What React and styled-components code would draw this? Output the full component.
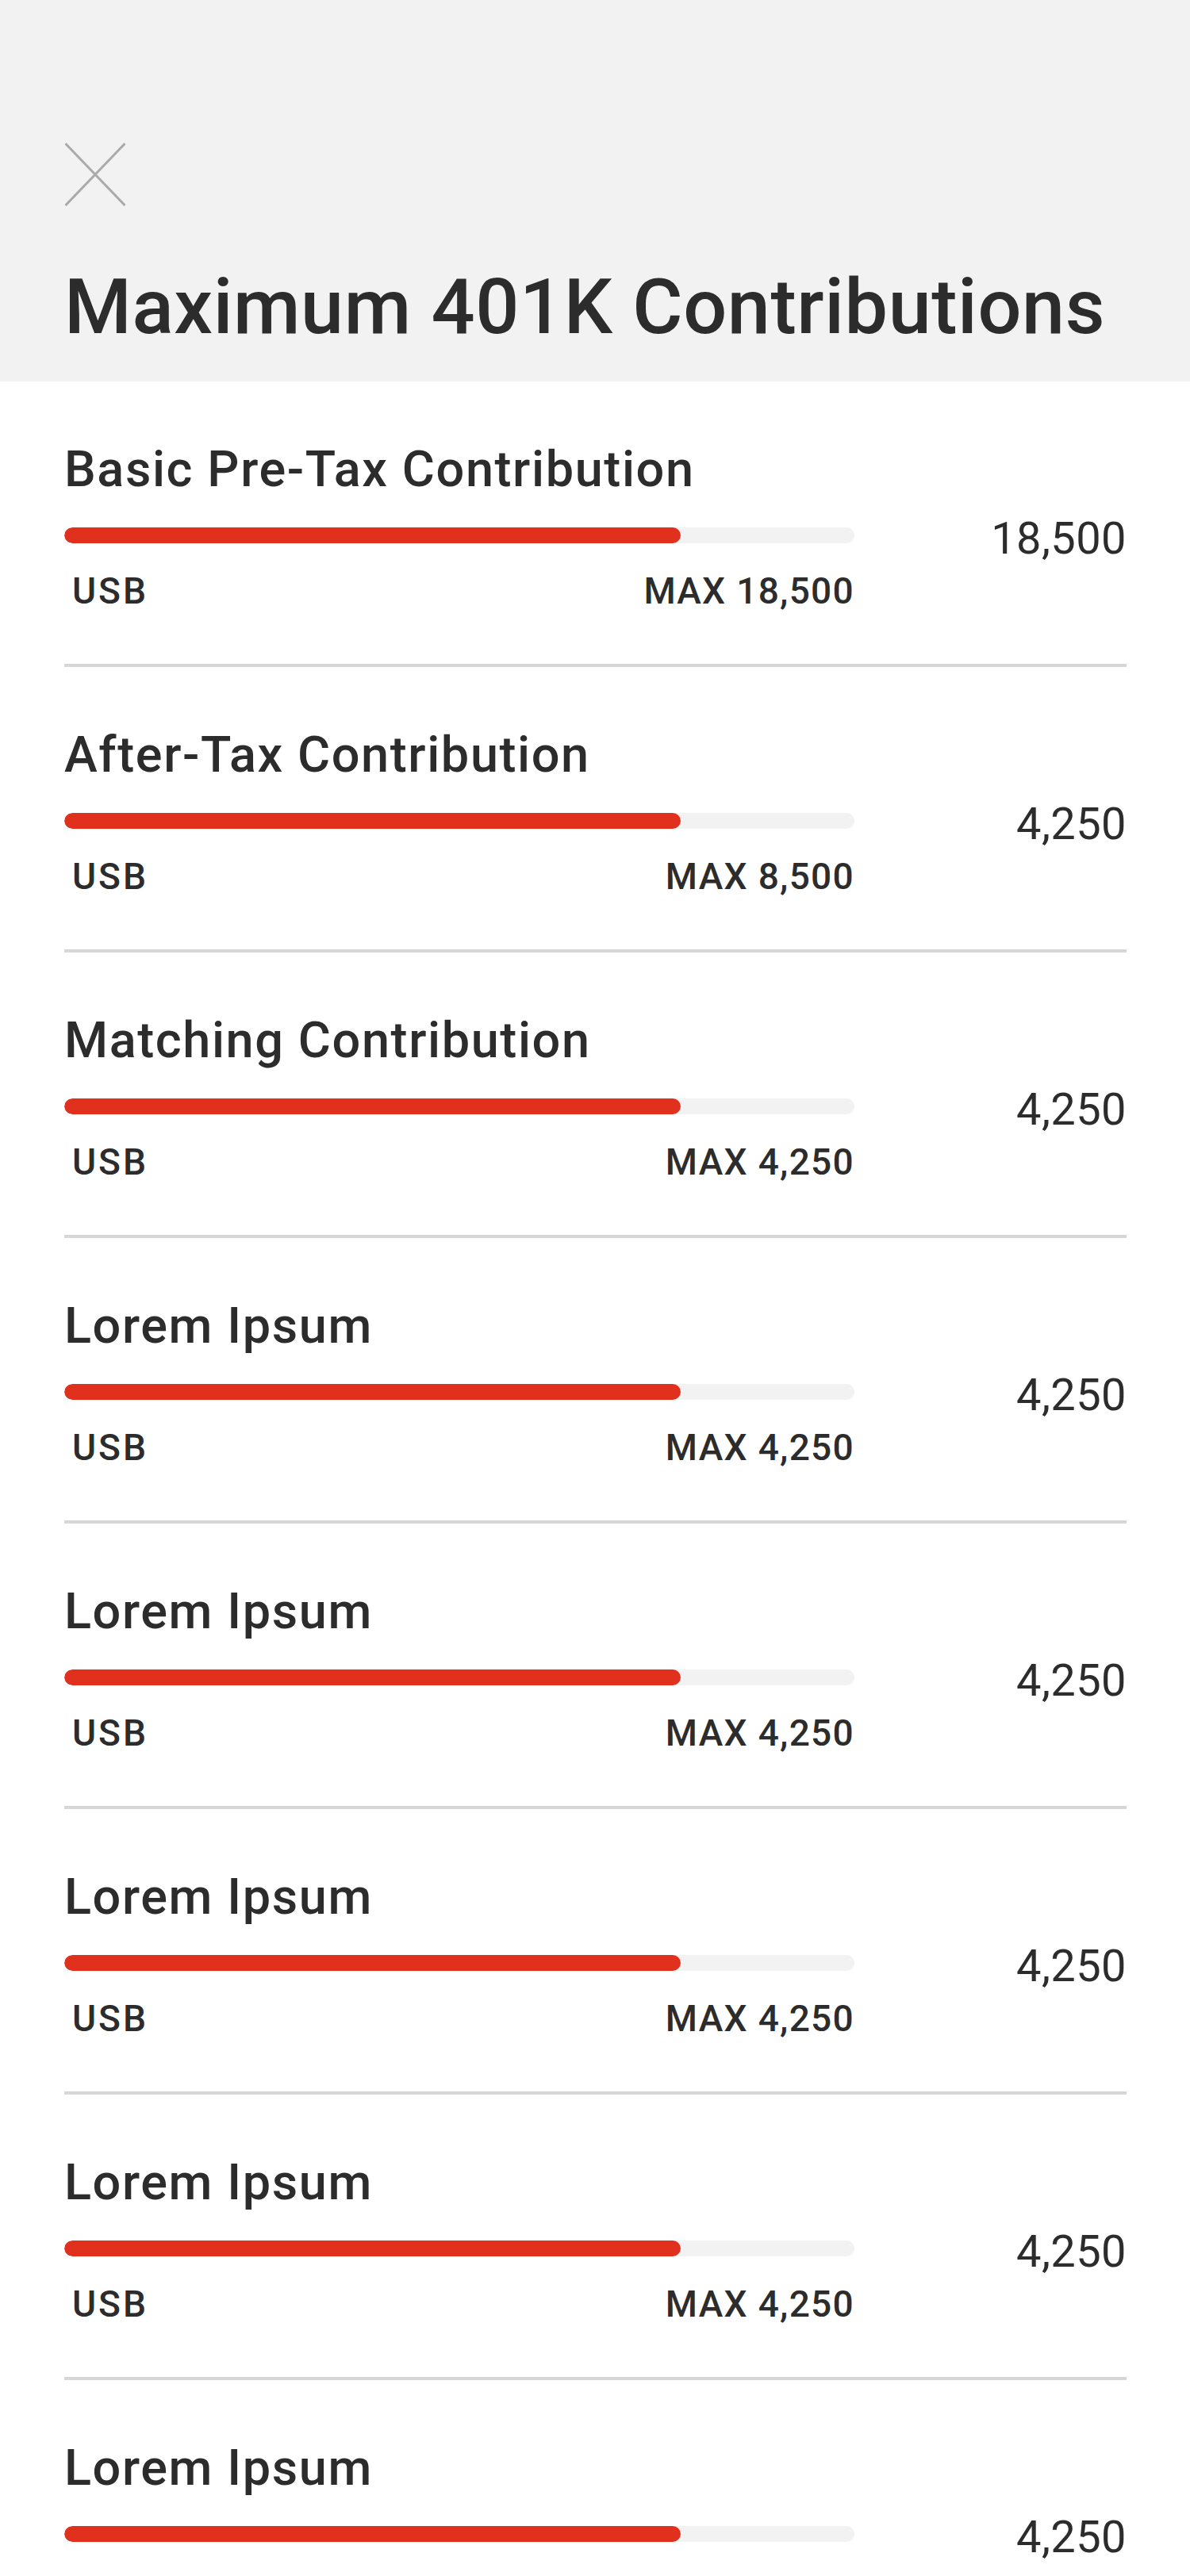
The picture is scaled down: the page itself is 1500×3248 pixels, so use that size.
import styled, { createGlobalStyle } from 'styled-components';

const GlobalStyle = createGlobalStyle`
  html, body {
    margin: 0;
    padding: 0;
    background: #ffffff;
  }
  body {
    font-family: Roboto, "Liberation Sans", Arial, sans-serif;
    color: #2c2c2c;
  }
`;

const Page = styled.div`
  width: 1500px;
  min-height: 3248px;
  background: #ffffff;
`;

const Header = styled.header`
  background: #f2f2f2;
  padding: 180px 81px 45px 81px;
  display: flex;
  flex-direction: column;
  align-items: flex-start;
`;

const CloseButton = styled.button`
  border: 0;
  padding: 0;
  margin: 0;
  background: transparent;
  width: 78px;
  height: 80px;
  cursor: pointer;
  display: block;
`;

const Title = styled.h1`
  margin: 79px 0 0 0;
  font-size: 97px;
  line-height: 1;
  font-weight: 500;
  letter-spacing: 0.6px;
  color: #2c2c2c;
  white-space: nowrap;
`;

const List = styled.ul`
  list-style: none;
  margin: 0;
  padding: 0 80px 0 81px;
`;

const Item = styled.li`
  padding: 79px 0 69px 0;
  border-bottom: 4px solid #d6d6d6;
`;

const ItemTitle = styled.h2`
  margin: 0;
  font-size: 63px;
  line-height: 1;
  font-weight: 500;
  letter-spacing: 1.6px;
  color: #2c2c2c;
  white-space: nowrap;
`;

const MeterRow = styled.div`
  display: flex;
  align-items: center;
  height: 56px;
  margin-top: 24px;
`;

const Track = styled.div`
  flex: 0 0 996px;
  height: 20px;
  border-radius: 10px;
  background: #f2f2f2;
  overflow: hidden;
`;

const Fill = styled.div`
  height: 100%;
  width: ${(p) => p.$pct}%;
  border-radius: 10px;
  background: #e0311f;
`;

const Value = styled.span`
  margin-left: auto;
  padding-top: 8px;
  font-size: 56px;
  line-height: 1;
  font-weight: 400;
  letter-spacing: 0.4px;
  color: #2c2c2c;
`;

const Labels = styled.div`
  width: 996px;
  margin-top: 19px;
  display: flex;
  justify-content: space-between;
  font-size: 46px;
  line-height: 1;
  font-weight: 500;
  letter-spacing: 1.3px;
  color: #2c2c2c;
`;

const Currency = styled.span`
  padding-left: 10px;
  letter-spacing: 3px;
`;

const rows = [
  { title: 'Basic Pre-Tax Contribution', max: '18,500', value: '18,500' },
  { title: 'After-Tax Contribution', max: '8,500', value: '4,250' },
  { title: 'Matching Contribution', max: '4,250', value: '4,250' },
  { title: 'Lorem Ipsum', max: '4,250', value: '4,250' },
  { title: 'Lorem Ipsum', max: '4,250', value: '4,250' },
  { title: 'Lorem Ipsum', max: '4,250', value: '4,250' },
  { title: 'Lorem Ipsum', max: '4,250', value: '4,250' },
  { title: 'Lorem Ipsum', max: '4,250', value: '4,250' },
];

const CloseIcon = () => (
  <svg width="78" height="80" viewBox="0 0 78 80" fill="none">
    <line x1="1.5" y1="1" x2="76.5" y2="79" stroke="#aaaaaa" strokeWidth="3" />
    <line x1="76.5" y1="1" x2="1.5" y2="79" stroke="#aaaaaa" strokeWidth="3" />
  </svg>
);

const App = () => (
  <>
    <GlobalStyle />
    <Page>
      <Header>
        <CloseButton aria-label="Close">
          <CloseIcon />
        </CloseButton>
        <Title>Maximum 401K Contributions</Title>
      </Header>
      <List>
        {rows.map((row, i) => (
          <Item key={i}>
            <ItemTitle>{row.title}</ItemTitle>
            <MeterRow>
              <Track>
                <Fill $pct={78} />
              </Track>
              <Value>{row.value}</Value>
            </MeterRow>
            <Labels>
              <Currency>USB</Currency>
              <span>MAX {row.max}</span>
            </Labels>
          </Item>
        ))}
      </List>
    </Page>
  </>
);

export default App;
